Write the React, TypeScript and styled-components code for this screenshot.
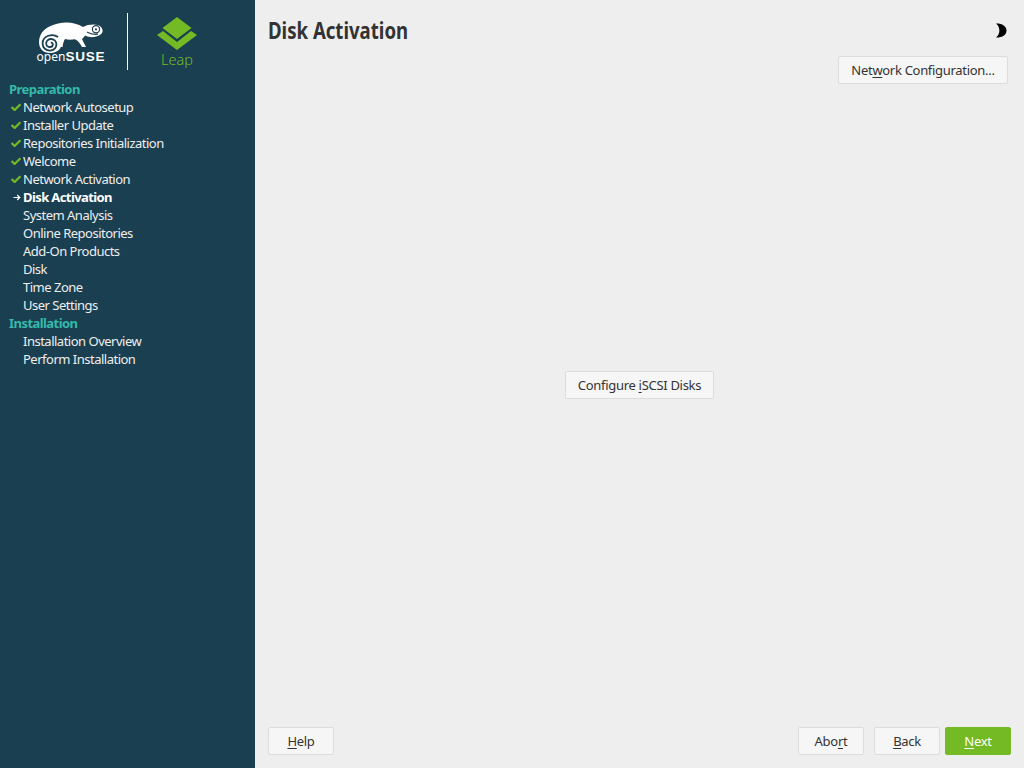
import React from "react";
import styled, { createGlobalStyle } from "styled-components";

const GlobalStyle = createGlobalStyle`
  html, body {
    margin: 0;
    padding: 0;
    height: 100%;
    background: #eeeeee;
    font-family: "Noto Sans", "Open Sans", sans-serif;
  }
  #root {
    height: 100%;
  }
`;

const Page = styled.div`
  display: flex;
  width: 1024px;
  height: 768px;
  overflow: hidden;
`;

const Sidebar = styled.aside`
  width: 255px;
  flex: none;
  background: #1a3f50;
  color: #eeeeee;
  font-size: 13px;
  letter-spacing: -0.5px;
`;

const LogoBar = styled.div`
  height: 80px;
  display: flex;
  align-items: flex-start;
  padding: 13px 0 0 38px;
  box-sizing: border-box;
  letter-spacing: 0;
`;

const SuseLogo = styled.div`
  width: 66px;
  margin-top: 9px;
  display: flex;
  flex-direction: column;
  align-items: center;
`;

const SuseWord = styled.div`
  margin-top: -3px;
  color: #ffffff;
  font-size: 12px;
  line-height: 14px;
  white-space: nowrap;
  b {
    font-family: "Liberation Sans", sans-serif;
    font-size: 13.5px;
    font-weight: 700;
    letter-spacing: 0.8px;
  }
`;

const Divider = styled.div`
  width: 1px;
  height: 57px;
  margin-left: 23px;
  background: #ffffff;
`;

const LeapLogo = styled.div`
  width: 40px;
  margin: 4px 0 0 29px;
  display: flex;
  flex-direction: column;
  align-items: center;
`;

const LeapWord = styled.div`
  color: #73ba25;
  font-size: 14.5px;
  font-weight: 300;
  line-height: 18px;
`;

const StepList = styled.div`
  display: flex;
  flex-direction: column;
`;

const SectionTitle = styled.div`
  height: 18px;
  line-height: 18px;
  padding-left: 9px;
  font-weight: 700;
  letter-spacing: -0.55px;
  color: #35b9ab;
`;

const Step = styled.div<{ $active?: boolean }>`
  height: 18px;
  line-height: 18px;
  display: flex;
  align-items: center;
  white-space: nowrap;
  font-weight: ${(p) => (p.$active ? 700 : 400)};
  letter-spacing: ${(p) => (p.$active ? "-0.6px" : "-0.5px")};
  color: ${(p) => (p.$active ? "#ffffff" : "#eeeeee")};
`;

const StepMark = styled.span`
  width: 23px;
  height: 18px;
  flex: none;
  display: flex;
  align-items: center;
  justify-content: flex-end;
  padding-right: 2px;
  box-sizing: border-box;
`;

const Main = styled.main`
  flex: 1;
  min-width: 0;
  display: flex;
  flex-direction: column;
  padding: 13px;
  box-sizing: border-box;
`;

const Header = styled.header`
  height: 36px;
  display: flex;
  align-items: center;
  justify-content: space-between;
`;

const Title = styled.h1`
  margin: -2px 0 0;
  font-size: 24px;
  line-height: 36px;
  font-weight: 700;
  color: #333333;
  white-space: nowrap;
  transform: scaleX(0.775);
  transform-origin: left center;
`;

const ThemeIcon = styled.svg`
  width: 12px;
  height: 15px;
  margin: -2px 4px 0 0;
`;

const TopActions = styled.div`
  display: flex;
  justify-content: flex-end;
  margin-top: 7px;
  padding-right: 3px;
`;

const Center = styled.div`
  flex: 1;
  display: flex;
  align-items: center;
  justify-content: center;
  padding-bottom: 41px;
  box-sizing: border-box;
`;

const Footer = styled.footer`
  display: flex;
  align-items: center;
`;

const FooterRight = styled.div`
  margin-left: auto;
  display: flex;
`;

const Button = styled.button<{ $width: number; $primary?: boolean; $gap?: number }>`
  width: ${(p) => p.$width}px;
  height: 28px;
  margin-left: ${(p) => p.$gap ?? 0}px;
  padding: 0;
  box-sizing: border-box;
  border: 1px solid ${(p) => (p.$primary ? "#73ba25" : "#dcdcdc")};
  border-radius: 2px;
  background: ${(p) => (p.$primary ? "#73ba25" : "#f6f6f6")};
  color: ${(p) => (p.$primary ? "#ffffff" : "#333333")};
  font-family: inherit;
  font-size: 13px;
  letter-spacing: -0.3px;
  white-space: nowrap;
  u {
    text-underline-offset: 2px;
  }
`;

const Check = () => (
  <svg width="10" height="8" viewBox="0 0 10 8">
    <path d="M0.6 4 L3.6 7 L9.4 1.2" fill="none" stroke="#73ba25" strokeWidth="2.2" />
  </svg>
);

const Arrow = () => (
  <svg width="8" height="7" viewBox="0 0 8 7">
    <path d="M0.5 3.5 H6.5 M4.2 1 L6.8 3.5 L4.2 6" fill="none" stroke="#ffffff" strokeWidth="1.2" />
  </svg>
);

const preparation = [
  { name: "Network Autosetup", state: "done" },
  { name: "Installer Update", state: "done" },
  { name: "Repositories Initialization", state: "done" },
  { name: "Welcome", state: "done" },
  { name: "Network Activation", state: "done" },
  { name: "Disk Activation", state: "active" },
  { name: "System Analysis" },
  { name: "Online Repositories" },
  { name: "Add-On Products" },
  { name: "Disk" },
  { name: "Time Zone" },
  { name: "User Settings" },
];

const installation = [{ name: "Installation Overview" }, { name: "Perform Installation" }];

const StepRow = ({ name, state }: { name: string; state?: string }) => (
  <Step $active={state === "active"}>
    <StepMark>
      {state === "done" && <Check />}
      {state === "active" && <Arrow />}
    </StepMark>
    {name}
  </Step>
);

const App = () => (
  <Page>
    <GlobalStyle />
    <Sidebar>
      <LogoBar>
        <SuseLogo>
          <svg width="66" height="31" viewBox="0 0 66 31">
            <path
              fill="#ffffff"
              d="M1 20 C1 11 8 4 20 1.5 C30 -0.5 38 1 45 5 C48 3.2 52 2.4 56 2.5 C61 2.6 64.6 5 64.6 9 C64.6 11.5 62 14 56 15 C53 15.5 50 14.8 47 13.5 C46 15 45 16.3 44 17 C45 19 46.5 22 48 25 L44 25 C42 21.5 40 18.5 37 17.3 C33 18 30 18 27 17 C25.5 19 25 22 24.6 25 L22.8 25 C21.5 28.5 17.5 31 12 31 C5 31 1 26.5 1 20 Z"
            />
            <path
              fill="none"
              stroke="#1a3f50"
              strokeWidth="1.8"
              d="M20 15 C15 11.5 4.6 13 4.6 21.5 C4.6 26 8 28.6 12 28.6 C16 28.6 18.4 25.5 18.4 22.5 C18.4 19 15.6 17 13 17 C10 17 8.2 19 8.2 21.4 C8.2 23.5 10 25 12 25 C13.7 25 14.8 23.7 14.8 22.4 C14.8 21.2 13.8 20.5 12.8 20.7"
            />
            <circle cx="58" cy="7.3" r="3.6" fill="none" stroke="#1a3f50" strokeWidth="1.2" />
            <circle cx="58" cy="7.3" r="1.1" fill="#1a3f50" />
            <path d="M49 10 C52 12 56 12.6 60 12.2" fill="none" stroke="#1a3f50" strokeWidth="1.2" />
          </svg>
          <SuseWord>
            open<b>SUSE</b>
          </SuseWord>
        </SuseLogo>
        <Divider />
        <LeapLogo>
          <svg width="40" height="33" viewBox="0 0 40 33">
            <path d="M20 0 L34.5 11 L20 22 L5.5 11 Z" fill="#73ba25" />
            <path d="M6 14 L20 25 L34 14 L40 18 L20 33 L0 18 Z" fill="#73ba25" />
          </svg>
          <LeapWord>Leap</LeapWord>
        </LeapLogo>
      </LogoBar>
      <StepList>
        <SectionTitle>Preparation</SectionTitle>
        {preparation.map((s) => (
          <StepRow key={s.name} name={s.name} state={s.state} />
        ))}
        <SectionTitle>Installation</SectionTitle>
        {installation.map((s) => (
          <StepRow key={s.name} name={s.name} />
        ))}
      </StepList>
    </Sidebar>
    <Main>
      <Header>
        <Title>Disk Activation</Title>
        <ThemeIcon viewBox="0 0 12 15">
          <path d="M1 0.5 C7 0.3 11.5 3 11.5 7.5 C11.5 12 7 14.7 1 14.5 C3.4 12.5 4.4 10 4.4 7.5 C4.4 5 3.4 2.5 1 0.5 Z" fill="#000000" />
        </ThemeIcon>
      </Header>
      <TopActions>
        <Button $width={170}>
          Net<u>w</u>ork Configuration...
        </Button>
      </TopActions>
      <Center>
        <Button $width={149}>
          Configure <u>i</u>SCSI Disks
        </Button>
      </Center>
      <Footer>
        <Button $width={66}>
          <u>H</u>elp
        </Button>
        <FooterRight>
          <Button $width={66}>
            Abo<u>r</u>t
          </Button>
          <Button $width={66} $gap={10}>
            <u>B</u>ack
          </Button>
          <Button $width={66} $gap={5} $primary>
            <u>N</u>ext
          </Button>
        </FooterRight>
      </Footer>
    </Main>
  </Page>
);

export default App;
